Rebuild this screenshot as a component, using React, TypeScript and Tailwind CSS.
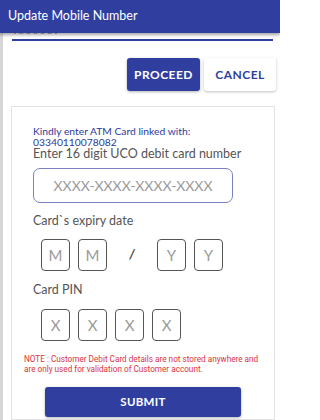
import React from 'react'

const Box = ({ ch }: { ch: string }) => (
  <div className="w-[29px] h-[32px] border border-[#555] rounded-[4px] flex items-center justify-center text-[15px] text-[#9a9a9a]">
    {ch}
  </div>
)

const App = () => {
  return (
    <div className="w-[280px] h-[420px] overflow-hidden bg-white relative" style={{ fontFamily: 'Lato, "Noto Sans", sans-serif' }}>
      <div className="relative z-10 h-[33px] bg-[#303f9f] flex items-center pl-[8px] text-white text-[12.5px] shadow-[0_2px_3px_rgba(0,0,0,0.35)]">
        Update Mobile Number
      </div>
      <div className="border-l-[3px] border-[#d6d6d6] h-[387px] flex flex-col">
        <div className="h-[2px] overflow-hidden pl-[11px]">
          <div className="-mt-[9px] text-[11px] text-[#8a8a8a] leading-none">XXXXXX</div>
        </div>
        <div className="ml-[9px] mr-[7px] mt-[4px] h-[2px] bg-[#303f9f]" />
        <div className="flex justify-end gap-[4px] pr-[4px] mt-[17px]">
          <button className="w-[73px] h-[33px] rounded-[3px] bg-[#303f9f] text-white text-[12px] font-bold tracking-[0.04em] shadow-[0_1px_3px_rgba(0,0,0,0.3)]">
            PROCEED
          </button>
          <button className="w-[72px] h-[33px] rounded-[3px] bg-white text-[#303f9f] text-[12px] font-bold tracking-[0.04em] shadow-[0_1px_3px_rgba(0,0,0,0.25)]">
            CANCEL
          </button>
        </div>
        <div className="ml-[8px] mr-[5px] mt-[15px] flex-1 border border-[#e3e3e3] bg-white pl-[21px] pt-[19px]">
          <div className="text-[10.3px] leading-[10.5px] text-[#2d3a9a]">
            <div>Kindly enter ATM Card linked with:</div>
            <div>03340110078082</div>
          </div>
          <div className="text-[12.5px] text-[#555] leading-[14px]">Enter 16 digit UCO debit card number</div>
          <div className="mt-[7px] w-[200px] h-[35px] border border-[#7b80c4] rounded-[7px] flex items-center justify-center text-[14px] text-[#9a9a9a]">
            XXXX-XXXX-XXXX-XXXX
          </div>
          <div className="mt-[11px] text-[12.5px] text-[#555] leading-[14px]">Card`s expiry date</div>
          <div className="mt-[11px] ml-[8px] flex items-center">
            <Box ch="M" />
            <div className="ml-[8px]"><Box ch="M" /></div>
            <div className="w-[50px] text-center text-[13px] font-bold text-[#444] italic">/</div>
            <Box ch="Y" />
            <div className="ml-[8px]"><Box ch="Y" /></div>
          </div>
          <div className="mt-[12px] text-[12.5px] text-[#555] leading-[14px]">Card PIN</div>
          <div className="mt-[12px] ml-[8px] flex gap-[8px]">
            <Box ch="X" />
            <Box ch="X" />
            <Box ch="X" />
            <Box ch="X" />
          </div>
          <div className="mt-[14px] -ml-[9px] text-[8.2px] leading-[9.5px] text-[#d9343a]" style={{ fontFamily: 'Roboto, sans-serif' }}>
            NOTE : Customer Debit Card details are not stored anywhere and
            <br />
            are only used for validation of Customer account.
          </div>
          <button className="mt-[13px] ml-[12px] w-[196px] h-[30px] rounded-[3px] bg-[#303f9f] text-white text-[11.5px] font-bold tracking-wide shadow-[0_1px_3px_rgba(0,0,0,0.3)]">
            SUBMIT
          </button>
        </div>
      </div>
    </div>
  )
}

export default App
